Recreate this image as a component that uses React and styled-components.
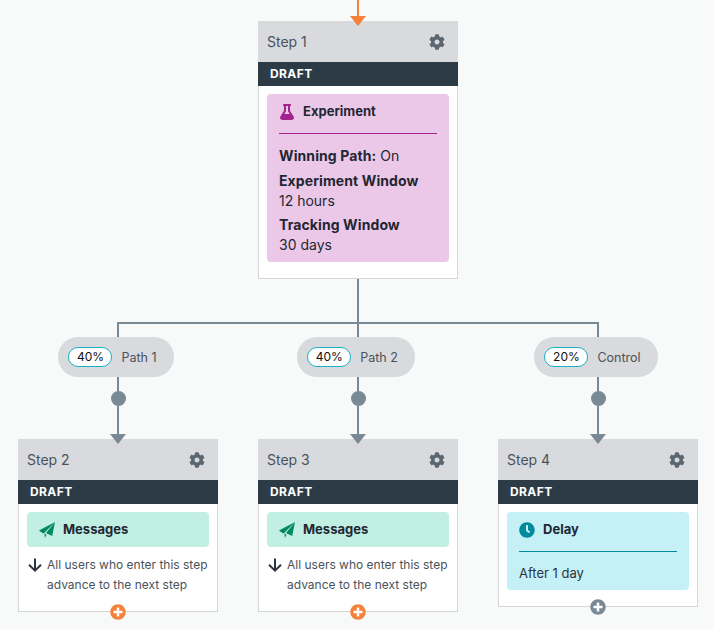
import styled, { createGlobalStyle } from "styled-components"
import { FaCog, FaFlask, FaClock, FaPlusCircle } from "react-icons/fa"

const GlobalStyle = createGlobalStyle`
  html, body {
    margin: 0;
    padding: 0;
    background: #f8f9f9;
    font-family: "Inter", "Liberation Sans", sans-serif;
    color: #1f2733;
  }
`

function Card({ title, children }) {
  return (
    <StepCard>
      <CardHeader>
        <StepName>{title}</StepName>
        <FaCog size={16} color="#5b6670" />
      </CardHeader>
      <DraftBar>DRAFT</DraftBar>
      {children}
    </StepCard>
  )
}

function PlaneIcon() {
  return (
    <svg width="16" height="16" viewBox="0 0 16 16">
      <path d="M0 8.4L16 0 5.2 11 4.2 11.6z" fill="#008a62" />
      <path d="M16 0L13.2 14 7 11z" fill="#008a62" />
      <path d="M5.4 11.6L7.4 12.4 6 16z" fill="#008a62" />
    </svg>
  )
}

function MessagesStep({ title }) {
  return (
    <Card title={title}>
      <CardBody>
        <MessageBox>
          <PlaneIcon />
          <BoxTitle>Messages</BoxTitle>
        </MessageBox>
        <AdvanceRow>
          <AdvanceArrow viewBox="0 0 14 14">
            <path d="M7 0.5v12M1 6.8L7 12.6 13 6.8" fill="none" stroke="#2d3640" strokeWidth="2" />
          </AdvanceArrow>
          <AdvanceText>All users who enter this step advance to the next step</AdvanceText>
        </AdvanceRow>
      </CardBody>
      <AddButton color="#f5813a" />
    </Card>
  )
}

function AddButton({ color }) {
  return (
    <AddWrap>
      <FaPlusCircle size={16} color={color} />
    </AddWrap>
  )
}

function Branch({ pct, label, children }) {
  return (
    <BranchColumn>
      <Stem $h={13} />
      <PathPill>
        <Percent>{pct}</Percent>
        <PathLabel>{label}</PathLabel>
      </PathPill>
      <Stem $h={14} />
      <Dot />
      <Stem $h={28} />
      <ArrowHead $color="#7a8a94" />
      {children}
    </BranchColumn>
  )
}

export default function App() {
  return (
    <Page>
      <GlobalStyle />
      <TopColumn>
        <Stem $h={16} $color="#f5813a" />
        <ArrowHead $color="#f5813a" />
        <Card title="Step 1">
          <CardBody>
            <ExperimentBox>
              <BoxHead>
                <FaFlask size={16} color="#a3238e" />
                <BoxTitle>Experiment</BoxTitle>
              </BoxHead>
              <BoxRule $color="#a3238e" />
              <InfoLine><b>Winning Path:</b> On</InfoLine>
              <InfoBlock>
                <b>Experiment Window</b>
                <span>12 hours</span>
              </InfoBlock>
              <InfoBlock>
                <b>Tracking Window</b>
                <span>30 days</span>
              </InfoBlock>
            </ExperimentBox>
          </CardBody>
        </Card>
        <Stem $h={43} />
      </TopColumn>
      <Rail />
      <Branches>
        <Branch pct="40%" label="Path 1">
          <MessagesStep title="Step 2" />
        </Branch>
        <Branch pct="40%" label="Path 2">
          <MessagesStep title="Step 3" />
        </Branch>
        <Branch pct="20%" label="Control">
          <Card title="Step 4">
            <CardBody>
              <DelayBox>
                <BoxHead>
                  <FaClock size={16} color="#008a9e" />
                  <BoxTitle>Delay</BoxTitle>
                </BoxHead>
                <BoxRule $color="#008a9e" />
                <DelayText>After 1 day</DelayText>
              </DelayBox>
            </CardBody>
            <AddButton color="#7a8a94" />
          </Card>
        </Branch>
      </Branches>
    </Page>
  )
}

const Page = styled.div`
  width: 714px;
  height: 630px;
  overflow: hidden;
  background: #f8f9f9;
`
const TopColumn = styled.div`
  width: 200px;
  margin-left: 258px;
  display: flex;
  flex-direction: column;
  align-items: center;
`
const Stem = styled.div`
  width: 2px;
  height: ${(p) => p.$h}px;
  background: ${(p) => p.$color || "#7a8a94"};
  flex-shrink: 0;
`
const ArrowHead = styled.div`
  width: 0;
  height: 0;
  border-left: 8px solid transparent;
  border-right: 8px solid transparent;
  border-top: 10px solid ${(p) => p.$color};
  margin-bottom: -5px;
  position: relative;
  z-index: 2;
  flex-shrink: 0;
`
const StepCard = styled.div`
  width: 200px;
  box-sizing: border-box;
  background: #ffffff;
  border: 1px solid #d3d7da;
  border-top: none;
  position: relative;
`
const CardHeader = styled.div`
  height: 41px;
  margin: 0 -1px;
  padding: 0 13px 0 9px;
  background: #d8dadd;
  display: flex;
  align-items: center;
  justify-content: space-between;
`
const StepName = styled.span`
  font-size: 14px;
  color: #4a525b;
`
const DraftBar = styled.div`
  height: 24px;
  margin: 0 -1px;
  padding-left: 12px;
  background: #2d3b47;
  color: #ffffff;
  font-size: 12px;
  font-weight: 700;
  letter-spacing: 0.4px;
  line-height: 24px;
`
const CardBody = styled.div`
  padding: 8px 8px 16px;
`
const ExperimentBox = styled.div`
  height: 168px;
  box-sizing: border-box;
  padding: 8px 12px 0;
  background: #ecc8e8;
  border-radius: 4px;
  font-size: 14px;
  b {
    font-weight: 700;
    letter-spacing: 0.1px;
  }
`
const BoxHead = styled.div`
  height: 19px;
  display: flex;
  align-items: center;
  gap: 8px;
`
const BoxTitle = styled.span`
  font-size: 13px;
  font-weight: 700;
  color: #1f2733;
  margin-top: -2px;
`
const BoxRule = styled.div`
  height: 1px;
  margin: 12px 0 12px;
  background: ${(p) => p.$color};
`
const InfoLine = styled.div`
  line-height: 20px;
  margin-bottom: 5px;
`
const InfoBlock = styled.div`
  display: flex;
  flex-direction: column;
  line-height: 20px;
  margin-bottom: 4px;
`
const MessageBox = styled.div`
  height: 35px;
  padding: 0 12px;
  background: #c1efe1;
  border-radius: 4px;
  display: flex;
  align-items: center;
  gap: 8px;
`
const AdvanceRow = styled.div`
  display: flex;
  gap: 5px;
  margin-top: 8px;
`
const AdvanceArrow = styled.svg`
  width: 14px;
  height: 14px;
  margin: 3px 0 0 1px;
  flex-shrink: 0;
`
const AdvanceText = styled.div`
  font-size: 12px;
  line-height: 20px;
  color: #4a525b;
`
const AddWrap = styled.div`
  position: absolute;
  left: 50%;
  bottom: -9px;
  transform: translateX(-50%);
  width: 16px;
  height: 16px;
  display: flex;
  background: #fff;
  border-radius: 50%;
`
const DelayBox = styled.div`
  height: 78px;
  box-sizing: border-box;
  padding: 8px 12px 0;
  background: #c4f0f6;
  border-radius: 4px;
`
const DelayText = styled.div`
  font-size: 13px;
  color: #2d3640;
  margin-top: 13px;
`
const Rail = styled.div`
  width: 482px;
  height: 2px;
  margin-left: 117px;
  background: #7a8a94;
`
const Branches = styled.div`
  display: grid;
  grid-template-columns: repeat(3, 200px);
  gap: 40px;
  padding-left: 18px;
`
const BranchColumn = styled.div`
  display: flex;
  flex-direction: column;
  align-items: center;
`
const PathPill = styled.div`
  height: 40px;
  margin-right: 4px;
  padding: 0 17px 0 10px;
  border-radius: 20px;
  background: #d8dadd;
  display: flex;
  align-items: center;
  gap: 9px;
`
const Percent = styled.span`
  width: 44px;
  height: 20px;
  box-sizing: border-box;
  border: 1px solid #17b0c4;
  border-radius: 10px;
  background: #fff;
  font-size: 12px;
  line-height: 18px;
  text-align: center;
  color: #111;
`
const PathLabel = styled.span`
  font-size: 12.5px;
  color: #4a525b;
`
const Dot = styled.div`
  width: 15px;
  height: 15px;
  border-radius: 50%;
  background: #7a8a94;
  flex-shrink: 0;
`
